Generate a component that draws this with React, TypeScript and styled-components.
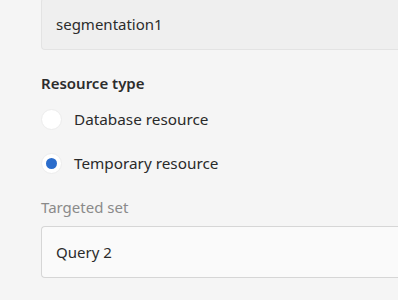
import React from "react";
import styled, { createGlobalStyle } from "styled-components";

const Global = createGlobalStyle`
  html, body { margin: 0; padding: 0; background: #f5f5f5; overflow: hidden; }
  body { font-family: "Noto Sans", "Open Sans", sans-serif; color: #2c2c2c; }
`;

const Page = styled.div`
  width: 100vw;
  padding-left: 41px;
  box-sizing: border-box;
  display: flex;
  flex-direction: column;
`;

const TextField = styled.div<{ $readOnly?: boolean }>`
  box-sizing: border-box;
  height: 52px;
  display: flex;
  align-items: center;
  padding-left: 14px;
  font-size: 15px;
  color: #2c2c2c;
  border-radius: 4px 0 0 4px;
  border: 1px solid ${(p) => (p.$readOnly ? "#e3e3e3" : "#d6d6d6")};
  border-right: none;
  background: ${(p) => (p.$readOnly ? "#efefef" : "#fafafa")};
  margin-top: ${(p) => (p.$readOnly ? "-2px" : "9px")};
`;

const SectionLabel = styled.div<{ $muted?: boolean }>`
  font-size: 15px;
  line-height: 20px;
  font-weight: ${(p) => (p.$muted ? 400 : 600)};
  color: ${(p) => (p.$muted ? "#8a8a8a" : "#2c2c2c")};
  margin-top: ${(p) => (p.$muted ? "12px" : "23px")};
`;

const RadioGroup = styled.div`
  display: flex;
  flex-direction: column;
  margin-top: 4px;
`;

const RadioRow = styled.label`
  height: 44px;
  display: flex;
  align-items: center;
  gap: 12px;
  font-size: 15.3px;
  color: #2a2a2a;
`;

const RadioCircle = styled.span<{ $checked?: boolean }>`
  box-sizing: border-box;
  width: 21px;
  height: 21px;
  border-radius: 50%;
  background: #ffffff;
  border: 1px solid #ececec;
  display: flex;
  align-items: center;
  justify-content: center;
  &::after {
    content: "";
    width: 11px;
    height: 11px;
    border-radius: 50%;
    background: ${(p) => (p.$checked ? "#2b6dcc" : "transparent")};
  }
`;

export default function App() {
  return (
    <>
      <Global />
      <Page>
        <TextField $readOnly>segmentation1</TextField>
        <SectionLabel>Resource type</SectionLabel>
        <RadioGroup>
          <RadioRow>
            <RadioCircle />
            Database resource
          </RadioRow>
          <RadioRow>
            <RadioCircle $checked />
            Temporary resource
          </RadioRow>
        </RadioGroup>
        <SectionLabel $muted>Targeted set</SectionLabel>
        <TextField>Query 2</TextField>
      </Page>
    </>
  );
}
